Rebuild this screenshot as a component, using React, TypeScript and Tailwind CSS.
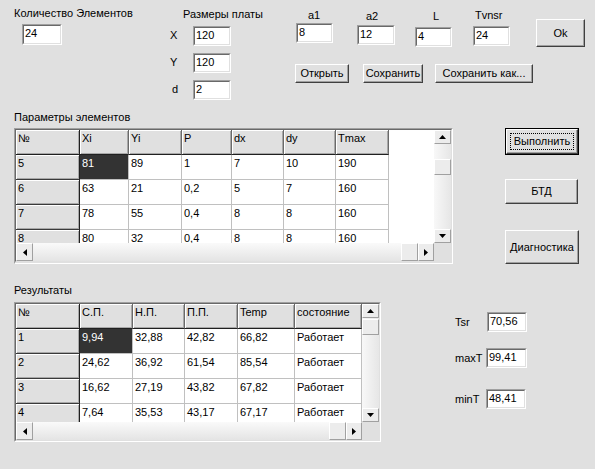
import React from "react";

type Cell = string;

function Edit({ value, className = "" }: { value: string; className?: string }) {
  return (
    <div className={`border border-t-[#a0a0a0] border-l-[#a0a0a0] border-b-white border-r-white ${className}`}>
      <div className="h-full border border-t-[#696969] border-l-[#696969] border-b-[#e0e0e0] border-r-[#e0e0e0] bg-white pl-[1px] pt-[1px]">
        {value}
      </div>
    </div>
  );
}

function Btn({ children, className = "" }: { children: React.ReactNode; className?: string }) {
  return (
    <button
      type="button"
      className={`flex items-center justify-center bg-[#e0e0e0] border border-t-white border-l-white border-b-[#404040] border-r-[#404040] shadow-[inset_-1px_-1px_0_#a0a0a0] ${className}`}
    >
      {children}
    </button>
  );
}

function Arrow({ dir }: { dir: "up" | "down" | "left" | "right" }) {
  const pts = {
    up: "0,4 3.5,0 7,4",
    down: "0,0 7,0 3.5,4",
    left: "4,0 4,7 0,3.5",
    right: "0,0 0,7 4,3.5",
  }[dir];
  const wide = dir === "up" || dir === "down";
  return (
    <svg width={wide ? 7 : 4} height={wide ? 4 : 7} viewBox={wide ? "0 0 7 4" : "0 0 4 7"}>
      <polygon points={pts} fill="#000" />
    </svg>
  );
}

const sbtn =
  "flex items-center justify-center bg-[#ececec] border border-t-white border-l-white border-b-[#a0a0a0] border-r-[#a0a0a0]";

function Grid({
  widths,
  headers,
  rows,
  sel,
  bodyW,
  bodyH,
  thumbTop,
}: {
  widths: string[];
  headers: Cell[];
  rows: Cell[][];
  sel: [number, number];
  bodyW: string;
  bodyH: string;
  thumbTop: string;
}) {
  return (
    <div className="border border-t-[#a0a0a0] border-l-[#a0a0a0] border-b-white border-r-white">
      <div className="border border-t-[#696969] border-l-[#696969] border-b-[#e0e0e0] border-r-[#e0e0e0] bg-white">
        <div className="flex">
          <div className={`overflow-hidden bg-white ${bodyW} ${bodyH}`}>
            {/* header row */}
            <div className="flex">
              {headers.map((h, i) => (
                <div
                  key={i}
                  className={`${widths[i]} h-[25px] shrink-0 pl-[2px] pt-[2px] bg-[#e0e0e0] border-r border-b border-b-[#202020] shadow-[inset_1px_1px_0_#fff,inset_-1px_-1px_0_#a8a8a8] ${
                    i === 0 ? "border-r-[#202020]" : "border-r-[#6a6a6a]"
                  }`}
                >
                  {h}
                </div>
              ))}
            </div>
            {rows.map((r, ri) => (
              <div key={ri} className="flex">
                {r.map((c, ci) =>
                  ci === 0 ? (
                    <div
                      key={ci}
                      className={`${widths[ci]} h-[25px] shrink-0 pl-[2px] pt-[2px] bg-[#e0e0e0] border-r border-b border-r-[#202020] border-b-[#3a3a3a] shadow-[inset_1px_1px_0_#fff,inset_-1px_-1px_0_#a8a8a8]`}
                    >
                      {c}
                    </div>
                  ) : (
                    <div
                      key={ci}
                      className={`${widths[ci]} h-[25px] shrink-0 pl-[2px] pt-[2px] border-r border-b border-[#c0c0c0] ${
                        sel[0] === ri && sel[1] === ci ? "bg-[#333333] text-white border-[#333333]" : "bg-white"
                      }`}
                    >
                      {c}
                    </div>
                  )
                )}
              </div>
            ))}
          </div>
          {/* vertical scroll bar */}
          <div className={`w-[17px] flex flex-col bg-linear-to-r from-[#f8f8f8] to-[#e6e6e6] ${bodyH}`}>
            <div className={`${sbtn} h-[14px]`}>
              <Arrow dir="up" />
            </div>
            <div className={`${sbtn} h-[16px] ${thumbTop}`} />
            <div className="flex-1" />
            <div className={`${sbtn} h-[14px]`}>
              <Arrow dir="down" />
            </div>
          </div>
        </div>
        {/* horizontal scroll bar */}
        <div className="flex h-[18px]">
          <div className="flex flex-1 bg-linear-to-b from-[#fafafa] to-[#e4e4e4]">
            <div className={`${sbtn} w-[17px]`}>
              <Arrow dir="left" />
            </div>
            <div className="flex-1" />
            <div className={`${sbtn} w-[17px]`} />
            <div className={`${sbtn} w-[16px]`}>
              <Arrow dir="right" />
            </div>
          </div>
          <div className="w-[17px] bg-[#e0e0e0]" />
        </div>
      </div>
    </div>
  );
}

export default function App() {
  const params = [
    ["5", "81", "89", "1", "7", "10", "190"],
    ["6", "63", "21", "0,2", "5", "7", "160"],
    ["7", "78", "55", "0,4", "8", "8", "160"],
    ["8", "80", "32", "0,4", "8", "8", "160"],
  ];
  const results = [
    ["1", "9,94", "32,88", "42,82", "66,82", "Работает"],
    ["2", "24,62", "36,92", "61,54", "85,54", "Работает"],
    ["3", "16,62", "27,19", "43,82", "67,82", "Работает"],
    ["4", "7,64", "35,53", "43,17", "67,17", "Работает"],
  ];

  return (
    <div className="w-[595px] h-[469px] overflow-hidden bg-[#e0e0e0] text-black text-[11px] leading-[13px] font-['Liberation_Sans',Arial,sans-serif]">
      {/* top block */}
      <div className="flex h-[106px]">
        <div className="w-[170px] pl-[14px] pt-[7px]">
          <div>Количество Элементов</div>
          <Edit value="24" className="mt-[4px] ml-[8px] w-[40px] h-[21px]" />
        </div>

        <div className="w-[125px] pt-[8px]">
          <div className="ml-[13px]">Размеры платы</div>
          <div className="flex mt-[5px]">
            <div className="w-[23px] mt-[3px]">X</div>
            <Edit value="120" className="w-[38px] h-[20px]" />
          </div>
          <div className="flex mt-[7px]">
            <div className="w-[23px] mt-[3px]">Y</div>
            <Edit value="120" className="w-[38px] h-[20px]" />
          </div>
          <div className="flex mt-[7px]">
            <div className="w-[23px] mt-[3px] pl-[2px]">d</div>
            <Edit value="2" className="w-[38px] h-[20px]" />
          </div>
        </div>

        <div className="flex flex-col">
          <div className="flex h-[48px]">
            <div className="ml-[1px] w-[37px] pt-[9px]">
              <div className="ml-[12px]">a1</div>
              <Edit value="8" className="mt-[1px] h-[20px]" />
            </div>
            <div className="ml-[24px] w-[38px] pt-[10px]">
              <div className="ml-[9px]">a2</div>
              <Edit value="12" className="mt-[2px] h-[20px]" />
            </div>
            <div className="ml-[20px] w-[37px] pt-[10px]">
              <div className="ml-[18px]">L</div>
              <Edit value="4" className="mt-[4px] h-[20px]" />
            </div>
            <div className="ml-[21px] w-[37px] pt-[9px]">
              <div className="ml-[2px]">Tvnsr</div>
              <Edit value="24" className="mt-[4px] h-[20px]" />
            </div>
            <Btn className="ml-[26px] mt-[19px] w-[49px] h-[28px]">Ok</Btn>
          </div>
          <div className="flex mt-[16px]">
            <Btn className="w-[54px] h-[19px]">Открыть</Btn>
            <Btn className="ml-[14px] w-[60px] h-[19px]">Сохранить</Btn>
            <Btn className="ml-[12px] w-[98px] h-[19px]">Сохранить как...</Btn>
          </div>
        </div>
      </div>

      {/* element parameters */}
      <div className="pl-[14px] pt-[5px]">
        <div>Параметры элементов</div>
        <div className="flex mt-[4px]">
          <Grid
            widths={["w-[64px]", "w-[49px]", "w-[53px]", "w-[50px]", "w-[52px]", "w-[52px]", "w-[53px]"]}
            headers={["№", "Xi", "Yi", "P", "dx", "dy", "Tmax"]}
            rows={params}
            sel={[0, 1]}
            bodyW="w-[418px]"
            bodyH="h-[113px]"
            thumbTop="mt-[15px]"
          />
          <div className="ml-[52px] flex flex-col">
            <button
              type="button"
              className="w-[74px] h-[27px] border border-black bg-[#e0e0e0]"
            >
              <div className="h-full border border-t-white border-l-white border-b-[#404040] border-r-[#404040] shadow-[inset_-1px_-1px_0_#a0a0a0] p-[3px]">
                <div className="h-full flex items-center justify-center border border-dotted border-black">
                  Выполнить
                </div>
              </div>
            </button>
            <Btn className="mt-[24px] w-[73px] h-[25px]">БТД</Btn>
            <Btn className="mt-[26px] w-[74px] h-[34px]">Диагностика</Btn>
          </div>
        </div>
      </div>

      {/* results */}
      <div className="pl-[14px] mt-[20px]">
        <div>Результаты</div>
        <div className="flex mt-[5px]">
          <Grid
            widths={["w-[64px]", "w-[53px]", "w-[52px]", "w-[53px]", "w-[57px]", "w-[67px]"]}
            headers={["№", "С.П.", "Н.П.", "П.П.", "Temp", "состояние"]}
            rows={results}
            sel={[0, 1]}
            bodyW="w-[346px]"
            bodyH="h-[118px]"
            thumbTop="mt-[1px]"
          />
          <div className="ml-[74px] flex flex-col">
            <div className="flex items-center mt-[10px]">
              <div className="w-[32px]">Tsr</div>
              <Edit value="70,56" className="w-[40px] h-[20px]" />
            </div>
            <div className="flex items-center mt-[16px]">
              <div className="w-[31px]">maxT</div>
              <Edit value="99,41" className="w-[41px] h-[20px]" />
            </div>
            <div className="flex items-center mt-[21px]">
              <div className="w-[31px]">minT</div>
              <Edit value="48,41" className="w-[40px] h-[20px]" />
            </div>
          </div>
        </div>
      </div>
    </div>
  );
}
